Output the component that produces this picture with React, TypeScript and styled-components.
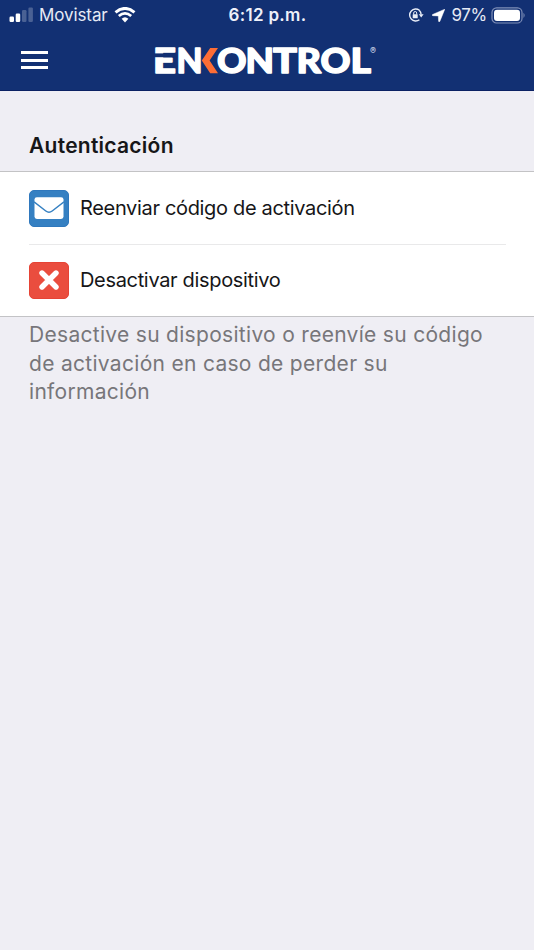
import React from 'react';
import styled, { createGlobalStyle } from 'styled-components';

const GlobalStyle = createGlobalStyle`
  * { box-sizing: border-box; }
  html, body, #root { height: 100%; }
  body {
    margin: 0;
    background: #efeef4;
    font-family: Inter, "Liberation Sans", sans-serif;
    color: #161618;
    overflow: hidden;
  }
`;

const Screen = styled.main`
  min-height: 100%;
  display: flex;
  flex-direction: column;
`;

const Header = styled.header`
  height: 91px;
  background: #123073;
  border-bottom: 1px solid #0b2163;
  color: #fff;
`;

const StatusBar = styled.div`
  height: 30px;
  display: grid;
  grid-template-columns: 1fr auto 1fr;
  align-items: center;
  padding: 0 8px 0 9px;
`;

const StatusGroup = styled.div<{ $end?: boolean }>`
  display: flex;
  align-items: center;
  justify-content: ${(p) => (p.$end ? 'flex-end' : 'flex-start')};
`;

const Carrier = styled.span`
  font-size: 17px;
  line-height: 20px;
  letter-spacing: -0.1px;
  margin: 0 6px 0 6px;
  color: #e6eaf5;
`;

const Clock = styled.time`
  font-size: 17px;
  line-height: 20px;
  font-weight: 600;
  letter-spacing: 0.3px;
  color: #eef1fa;
`;

const Charge = styled.span`
  font-size: 17px;
  line-height: 20px;
  letter-spacing: -0.3px;
  margin: 0 4px 0 6px;
  color: #e6eaf5;
`;

const NavBar = styled.nav`
  height: 60px;
  display: flex;
  align-items: center;
  padding-left: 21px;
`;

const MenuButton = styled.button`
  border: 0;
  padding: 0;
  width: 27px;
  height: 18px;
  background: none;
  display: flex;
  flex-direction: column;
  justify-content: space-between;
`;

const MenuLine = styled.span`
  height: 3px;
  width: 100%;
  background: #fff;
`;

const Logo = styled.svg`
  display: block;
  margin-left: 104px;
  overflow: visible;
`;

const LogoLetter = styled.text`
  font-family: Lato, Inter, sans-serif;
  font-weight: 900;
  font-size: 34px;
  fill: #fff;
  stroke: #fff;
  stroke-width: 1.4px;
  stroke-linejoin: round;
`;

const LogoMark = styled.text`
  font-family: Inter, sans-serif;
  font-weight: 700;
  font-size: 9px;
  fill: #c3cce2;
`;

const SectionTitle = styled.h1`
  margin: 0;
  height: 80px;
  padding: 42px 29px 0;
  font-size: 21px;
  line-height: 26px;
  font-weight: 600;
  letter-spacing: 0.26px;
`;

const List = styled.ul`
  list-style: none;
  margin: 0;
  padding: 0 28px 0 29px;
  background: #fff;
  border-top: 1px solid #c3c3c5;
  border-bottom: 1px solid #c3c3c6;
`;

const Row = styled.li`
  height: 72px;
  display: flex;
  align-items: center;
  gap: 11px;
  font-size: 20px;
  line-height: 26px;

  & + & {
    border-top: 1px solid #e9e9ea;
    padding-bottom: 1px;
  }
`;

const Tile = styled.span<{ $color: string; $edge: string }>`
  width: 40px;
  height: 37px;
  border-radius: 5px;
  background: ${(p) => p.$color};
  border: 1px solid ${(p) => p.$edge};
  display: flex;
  align-items: center;
  justify-content: center;
`;

const RowLabel = styled.span`
  letter-spacing: -0.33px;
  white-space: nowrap;
`;

const Note = styled.p`
  margin: 0;
  padding: 4px 29px 0;
  font-size: 21px;
  line-height: 28.5px;
  letter-spacing: 0.3px;
  color: #77767a;
`;

const letters = [
  { ch: 'E', x: 153, w: 23 },
  { ch: 'N', x: 176.6, w: 26 },
  { ch: 'O', x: 217, w: 29.5 },
  { ch: 'N', x: 245.5, w: 28.5 },
  { ch: 'T', x: 273, w: 24 },
  { ch: 'R', x: 296.5, w: 24.5 },
  { ch: 'O', x: 320.5, w: 30 },
  { ch: 'L', x: 350.5, w: 20.5 },
];

function EnkontrolLogo() {
  return (
    <Logo width="226" height="34" viewBox="152 43 226 34" role="img" aria-label="ENKONTROL">
      {letters.map((l, i) => (
        <LogoLetter key={i} x={l.x} y={73} textLength={l.w} lengthAdjust="spacingAndGlyphs">
          {l.ch}
        </LogoLetter>
      ))}
      <rect x="154" y="53.4" width="20" height="3.8" fill="#123073" />
      <path d="M210.2 48H218L209.6 60.6L218 73.3H210.2L201.8 60.6Z" fill="#fd6d35" />
      <LogoMark x="370" y="53.8">®</LogoMark>
    </Logo>
  );
}

function Signal() {
  return (
    <svg width="24" height="16" viewBox="0 0 24 16" fill="#fff">
      <rect x="0.5" y="9.5" width="4.5" height="5.5" rx="1.2" />
      <rect x="6.7" y="6.5" width="4.5" height="8.5" rx="1.2" />
      <rect x="13" y="3" width="4.5" height="12" rx="1.2" opacity=".24" />
      <rect x="19.4" y="0.5" width="4.5" height="14.5" rx="1.2" opacity=".24" />
    </svg>
  );
}

function Wifi() {
  return (
    <svg width="22" height="16" viewBox="0 0 22 16" fill="none" stroke="#fff">
      <path d="M1.5 5.3Q11-2.4 20.5 5.3" strokeWidth="3" />
      <path d="M4.8 9Q11 3.8 17.2 9" strokeWidth="2.7" />
      <path d="M7.6 11.8Q11 8.8 14.4 11.8L11 15.5Z" fill="#fff" stroke="none" />
    </svg>
  );
}

function RotationLock() {
  return (
    <svg width="16" height="14" viewBox="0 0 16 14" fill="none" stroke="#e9edf7" strokeWidth="1.4">
      <path d="M11.4 2.3A6 6 0 1 0 11.4 11.7" />
      <path d="M11.2 2.2A6 6 0 0 1 13.1 6.5" />
      <path d="M10.8 6.2H15.6L13.2 9.4Z" fill="#e9edf7" stroke="none" />
      <rect x="4.7" y="6.3" width="5" height="3.9" rx=".5" fill="#e9edf7" stroke="none" />
      <path d="M5.7 6.5V5A1.5 1.5 0 0 1 8.7 5V6.5" strokeWidth="1" />
    </svg>
  );
}

const Arrow = styled.svg`
  margin-left: 8px;
`;

function Battery() {
  return (
    <svg width="35" height="17" viewBox="0 0 35 17" fill="none">
      <rect x="1" y="0.8" width="30" height="15.2" rx="4.6" stroke="#7f8fb8" strokeWidth="1.2" />
      <rect x="3" y="2.8" width="26" height="11.2" rx="3" fill="#fff" />
      <path d="M32.5 5.8Q34.7 8.4 32.5 11Z" fill="#7f8fb8" />
    </svg>
  );
}

function Envelope() {
  return (
    <svg width="30" height="22" viewBox="0 0 30 22">
      <rect x=".5" y=".2" width="29" height="21.7" rx="2.4" fill="#fff" />
      <path d="M0 4.9L11.8 14Q15 16.4 18.2 14L30 4.9" fill="none" stroke="#3580c2" strokeWidth="1.5" />
    </svg>
  );
}

function Cross() {
  return (
    <svg width="20" height="20" viewBox="0 0 20 20" fill="none" stroke="#fff" strokeWidth="5.4" strokeLinecap="round">
      <path d="M3 3L17 17M17 3L3 17" />
    </svg>
  );
}

export default function App() {
  return (
    <>
      <GlobalStyle />
      <Screen>
        <Header>
          <StatusBar>
            <StatusGroup>
              <Signal />
              <Carrier>Movistar</Carrier>
              <Wifi />
            </StatusGroup>
            <Clock>6:12 p.m.</Clock>
            <StatusGroup $end>
              <RotationLock />
              <Arrow width="13" height="13" viewBox="0 0 13 13" fill="#fff">
                <path d="M12.8.2L7.8 12.4Q6.9 13.4 6.6 12.2L6.3 6.9L.9 6.7Q-.5 6.3.6 5.5Z" stroke="#fff" strokeWidth=".5" />
              </Arrow>
              <Charge>97%</Charge>
              <Battery />
            </StatusGroup>
          </StatusBar>
          <NavBar>
            <MenuButton aria-label="Menú">
              <MenuLine />
              <MenuLine />
              <MenuLine />
            </MenuButton>
            <EnkontrolLogo />
          </NavBar>
        </Header>
        <SectionTitle>Autenticación</SectionTitle>
        <List>
          <Row>
            <Tile $color="#3580c2" $edge="#2f78bd">
              <Envelope />
            </Tile>
            <RowLabel>Reenviar código de activación</RowLabel>
          </Row>
          <Row>
            <Tile $color="#ea4d3e" $edge="#e64335">
              <Cross />
            </Tile>
            <RowLabel>Desactivar dispositivo</RowLabel>
          </Row>
        </List>
        <Note>Desactive su dispositivo o reenvíe su código de activación en caso de perder su información</Note>
      </Screen>
    </>
  );
}
